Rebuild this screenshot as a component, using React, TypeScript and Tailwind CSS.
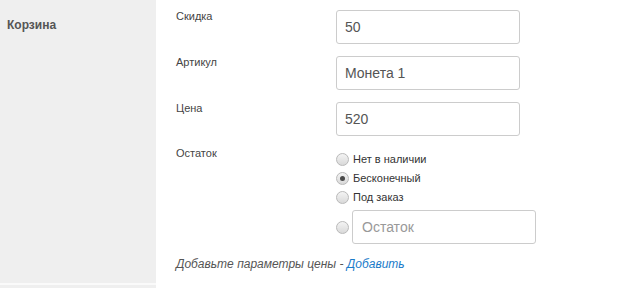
import React from "react";

const font = { fontFamily: '"Liberation Sans", Arial, sans-serif' };

function Radio({ checked = false }: { checked?: boolean }) {
  return (
    <span className="flex h-[13px] w-[13px] shrink-0 items-center justify-center rounded-full border border-[#b9b9b9] bg-gradient-to-b from-[#f4f4f4] to-[#d9d9d9]">
      {checked && <span className="h-[5px] w-[5px] rounded-full bg-[#4a4a4a]" />}
    </span>
  );
}

function Field({ label, value }: { label: string; value: string }) {
  return (
    <div className="flex h-[34px]">
      <div className="w-[160px] text-[11px] leading-[13px] text-[#444]">{label}</div>
      <input
        readOnly
        value={value}
        className="h-[34px] w-[184px] rounded-[3px] border border-[#cccccc] bg-white px-[8px] text-[14px] text-[#555] outline-none"
      />
    </div>
  );
}

export default function App() {
  return (
    <div className="flex h-[288px] w-[626px] overflow-hidden bg-white" style={font}>
      {/* боковая колонка */}
      <div className="flex w-[156px] flex-col">
        <div className="h-[283px] bg-[#efefef] px-[7px] pt-[16px] text-[12px] font-bold text-[#555]">Корзина</div>
        <div className="h-[2px] bg-[#fafafa]" />
        <div className="flex-1 bg-[#efefef]" />
      </div>

      <div className="flex flex-1 flex-col gap-[12px] pl-[20px] pt-[10px]">
        <Field label="Скидка" value="50" />
        <Field label="Артикул" value="Монета 1" />
        <Field label="Цена" value="520" />

        <div className="flex">
          <div className="-mt-[1px] w-[160px] text-[11px] leading-[13px] text-[#444]">Остаток</div>
          <div className="flex flex-col pt-[2px] text-[11px] text-[#333]">
            <label className="flex h-[19px] items-center gap-[4px]">
              <Radio /> Нет в наличии
            </label>
            <label className="flex h-[19px] items-center gap-[4px]">
              <Radio checked /> Бесконечный
            </label>
            <label className="flex h-[19px] items-center gap-[4px]">
              <Radio /> Под заказ
            </label>
            <div className="mt-[3px] flex items-center gap-[3px]">
              <Radio />
              <input
                readOnly
                placeholder="Остаток"
                className="h-[34px] w-[184px] rounded-[3px] border border-[#cccccc] bg-white px-[9px] text-[14px] text-[#555] outline-none placeholder:text-[#999]"
              />
            </div>
          </div>
        </div>

        <div className="-mt-[1px] text-[12px] italic text-[#555]">
          Добавьте параметры цены - <span className="text-[#1a7bc9]">Добавить</span>
        </div>
      </div>
    </div>
  );
}
